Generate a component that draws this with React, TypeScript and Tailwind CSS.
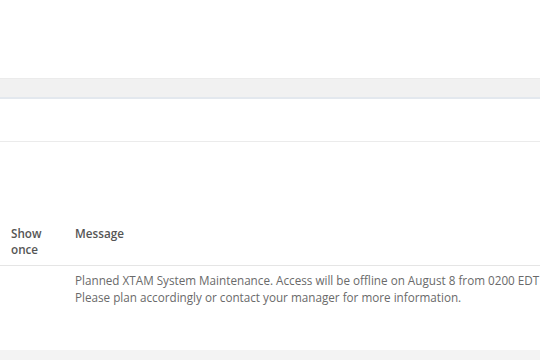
export default function App() {
  return (
    <div className="w-[540px] h-[360px] overflow-hidden bg-white font-['Open_Sans',sans-serif] text-[11.7px]">
      <div className="h-[78px]" />
      <div className="h-[21px] bg-[#f1f1f1] border-t border-[#ebebeb] border-b-2 border-b-[#e3e8ee]" />
      <div className="h-[43px] border-b border-[#ebebeb]" />
      <div className="h-[82px]" />
      <div className="w-[900px]">
        <div className="flex border-b border-[#e5e5e5] pt-[1px] pb-[8px] font-semibold text-[#555] leading-[16px]">
          <div className="w-[75px] shrink-0 pl-[11px]">Show<br />once</div>
          <div>Message</div>
        </div>
        <div className="flex pt-[6px] h-[84px] text-[#6a6a6a] leading-[17px]">
          <div className="w-[75px] shrink-0" />
          <div className="whitespace-nowrap">
            Planned XTAM System Maintenance. Access will be offline on August 8 from 0200 EDT to 0600 EDT.
            <br />
            Please plan accordingly or contact your manager for more information.
          </div>
        </div>
      </div>
      <div className="h-[20px] bg-[#f3f3f3]" />
    </div>
  );
}
